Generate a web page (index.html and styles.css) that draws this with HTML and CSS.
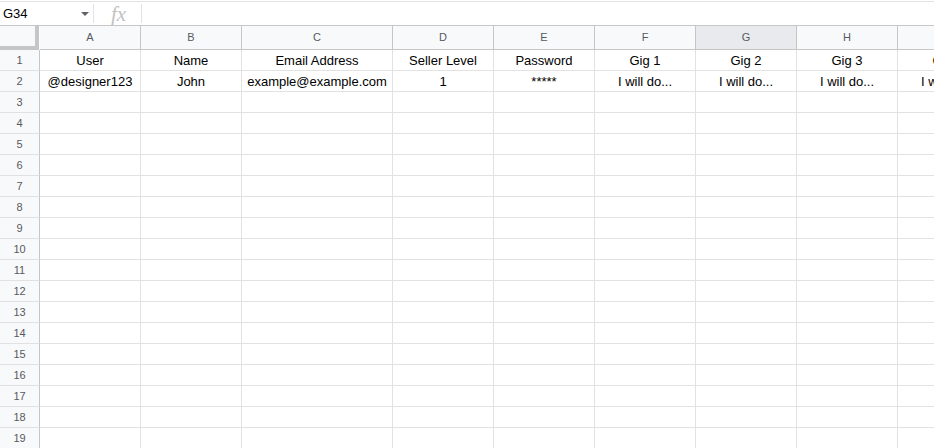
FILE: index.html
```html
<!DOCTYPE HTML>
<html>

<head>
    <title>Sellers</title>
    <meta name="viewport" content="width=device-width, initial-scale=1">
    <link rel="stylesheet" href="styles.css">
</head>

<body>
    <div class="formula-bar">
        <div class="name-box">
            <span class="cell-ref">G34</span>
            <span class="drop"></span>
        </div>
        <div class="fx">fx</div>
        <div class="formula-input"></div>
    </div>
    <div class="sheet">
        <div class="row head">
            <div class="corner"></div>
            <div class="col">A</div>
            <div class="col">B</div>
            <div class="col">C</div>
            <div class="col">D</div>
            <div class="col">E</div>
            <div class="col">F</div>
            <div class="col active">G</div>
            <div class="col">H</div>
            <div class="col">I</div>
        </div>
        <div class="row">
            <div class="num">1</div>
            <div class="cell">User</div>
            <div class="cell">Name</div>
            <div class="cell">Email Address</div>
            <div class="cell">Seller Level</div>
            <div class="cell">Password</div>
            <div class="cell">Gig 1</div>
            <div class="cell">Gig 2</div>
            <div class="cell">Gig 3</div>
            <div class="cell">Gig 4</div>
        </div>
        <div class="row">
            <div class="num">2</div>
            <div class="cell">@designer123</div>
            <div class="cell">John</div>
            <div class="cell">example@example.com</div>
            <div class="cell">1</div>
            <div class="cell">*****</div>
            <div class="cell">I will do...</div>
            <div class="cell">I will do...</div>
            <div class="cell">I will do...</div>
            <div class="cell">I will do...</div>
        </div>
        <div class="row"><div class="num">3</div><div class="cell"></div><div class="cell"></div><div class="cell"></div><div class="cell"></div><div class="cell"></div><div class="cell"></div><div class="cell"></div><div class="cell"></div><div class="cell"></div></div>
        <div class="row"><div class="num">4</div><div class="cell"></div><div class="cell"></div><div class="cell"></div><div class="cell"></div><div class="cell"></div><div class="cell"></div><div class="cell"></div><div class="cell"></div><div class="cell"></div></div>
        <div class="row"><div class="num">5</div><div class="cell"></div><div class="cell"></div><div class="cell"></div><div class="cell"></div><div class="cell"></div><div class="cell"></div><div class="cell"></div><div class="cell"></div><div class="cell"></div></div>
        <div class="row"><div class="num">6</div><div class="cell"></div><div class="cell"></div><div class="cell"></div><div class="cell"></div><div class="cell"></div><div class="cell"></div><div class="cell"></div><div class="cell"></div><div class="cell"></div></div>
        <div class="row"><div class="num">7</div><div class="cell"></div><div class="cell"></div><div class="cell"></div><div class="cell"></div><div class="cell"></div><div class="cell"></div><div class="cell"></div><div class="cell"></div><div class="cell"></div></div>
        <div class="row"><div class="num">8</div><div class="cell"></div><div class="cell"></div><div class="cell"></div><div class="cell"></div><div class="cell"></div><div class="cell"></div><div class="cell"></div><div class="cell"></div><div class="cell"></div></div>
        <div class="row"><div class="num">9</div><div class="cell"></div><div class="cell"></div><div class="cell"></div><div class="cell"></div><div class="cell"></div><div class="cell"></div><div class="cell"></div><div class="cell"></div><div class="cell"></div></div>
        <div class="row"><div class="num">10</div><div class="cell"></div><div class="cell"></div><div class="cell"></div><div class="cell"></div><div class="cell"></div><div class="cell"></div><div class="cell"></div><div class="cell"></div><div class="cell"></div></div>
        <div class="row"><div class="num">11</div><div class="cell"></div><div class="cell"></div><div class="cell"></div><div class="cell"></div><div class="cell"></div><div class="cell"></div><div class="cell"></div><div class="cell"></div><div class="cell"></div></div>
        <div class="row"><div class="num">12</div><div class="cell"></div><div class="cell"></div><div class="cell"></div><div class="cell"></div><div class="cell"></div><div class="cell"></div><div class="cell"></div><div class="cell"></div><div class="cell"></div></div>
        <div class="row"><div class="num">13</div><div class="cell"></div><div class="cell"></div><div class="cell"></div><div class="cell"></div><div class="cell"></div><div class="cell"></div><div class="cell"></div><div class="cell"></div><div class="cell"></div></div>
        <div class="row"><div class="num">14</div><div class="cell"></div><div class="cell"></div><div class="cell"></div><div class="cell"></div><div class="cell"></div><div class="cell"></div><div class="cell"></div><div class="cell"></div><div class="cell"></div></div>
        <div class="row"><div class="num">15</div><div class="cell"></div><div class="cell"></div><div class="cell"></div><div class="cell"></div><div class="cell"></div><div class="cell"></div><div class="cell"></div><div class="cell"></div><div class="cell"></div></div>
        <div class="row"><div class="num">16</div><div class="cell"></div><div class="cell"></div><div class="cell"></div><div class="cell"></div><div class="cell"></div><div class="cell"></div><div class="cell"></div><div class="cell"></div><div class="cell"></div></div>
        <div class="row"><div class="num">17</div><div class="cell"></div><div class="cell"></div><div class="cell"></div><div class="cell"></div><div class="cell"></div><div class="cell"></div><div class="cell"></div><div class="cell"></div><div class="cell"></div></div>
        <div class="row"><div class="num">18</div><div class="cell"></div><div class="cell"></div><div class="cell"></div><div class="cell"></div><div class="cell"></div><div class="cell"></div><div class="cell"></div><div class="cell"></div><div class="cell"></div></div>
        <div class="row"><div class="num">19</div><div class="cell"></div><div class="cell"></div><div class="cell"></div><div class="cell"></div><div class="cell"></div><div class="cell"></div><div class="cell"></div><div class="cell"></div><div class="cell"></div></div>
    </div>
</body>

</html>
```

FILE: styles.css
```css
html {
    font-family: "Liberation Sans", Arial, Helvetica, sans-serif;
}

body {
    margin: 0;
    overflow: hidden;
    background-color: #fff;
}

.formula-bar {
    display: flex;
    height: 23px;
    margin-top: 1px;
    border-top: 1px solid #e3e3e3;
    border-bottom: 1px solid #c7c7c7;
}

.name-box {
    width: 94px;
    display: flex;
    align-items: center;
    justify-content: space-between;
    padding: 0 4px 0 3px;
    box-sizing: border-box;
    border-right: 1px solid #e3e3e3;
    margin: 2px 0;
}

.cell-ref {
    font-size: 13px;
    color: #000;
}

.drop {
    width: 0;
    height: 0;
    border-left: 4px solid transparent;
    border-right: 4px solid transparent;
    border-top: 4px solid #5f6368;
}

.fx {
    width: 48px;
    box-sizing: border-box;
    padding-left: 17px;
    font-family: "Liberation Serif", "Times New Roman", serif;
    font-style: italic;
    font-size: 21px;
    line-height: 20px;
    color: #c2c2c2;
    border-right: 1px solid #e3e3e3;
    margin: 2px 0;
}

.formula-input {
    flex: 1;
}

.sheet {
    width: 999px;
}

.row {
    display: grid;
    grid-template-columns: 40px 101px 101px 151px 101px 101px 101px 101px 101px 101px;
    height: 21px;
}

.row.head {
    height: 24px;
}

.corner {
    background-color: #f8f9fa;
    border-right: 4px solid #c4c7c5;
    border-bottom: 4px solid #c4c7c5;
    box-sizing: border-box;
    margin-right: 1px;
}

.col {
    background-color: #f8f9fa;
    border-right: 1px solid #c4c7c5;
    border-bottom: 1px solid #c4c7c5;
    font-size: 11px;
    color: #575a5e;
    text-align: center;
    line-height: 23px;
}

.col.active {
    background-color: #e8eaed;
}

.num {
    background-color: #f8f9fa;
    border-right: 1px solid #c4c7c5;
    border-bottom: 1px solid #e1e1e1;
    font-size: 11px;
    color: #575a5e;
    text-align: center;
    line-height: 20px;
}

.cell {
    border-right: 1px solid #e2e2e3;
    border-bottom: 1px solid #e2e2e3;
    font-size: 13px;
    color: #000;
    text-align: center;
    line-height: 21px;
    white-space: nowrap;
    overflow: hidden;
}
```
